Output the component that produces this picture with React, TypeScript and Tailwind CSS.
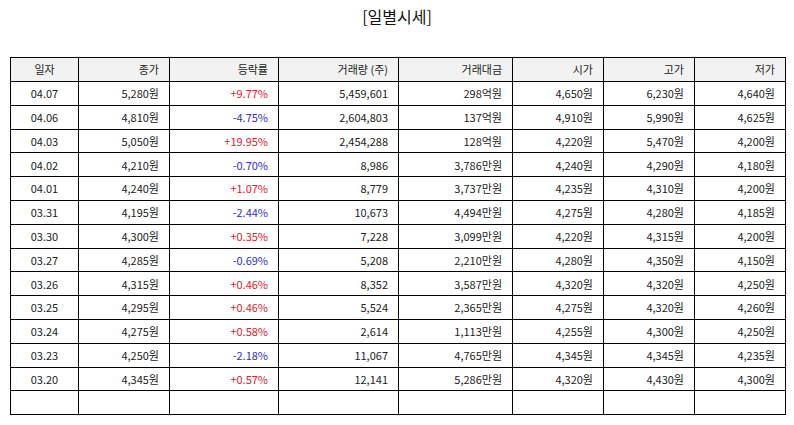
const ROWS = [
  ["04.07", "5,280원", "+9.77%", "5,459,601", "298억원", "4,650원", "6,230원", "4,640원"],
  ["04.06", "4,810원", "-4.75%", "2,604,803", "137억원", "4,910원", "5,990원", "4,625원"],
  ["04.03", "5,050원", "+19.95%", "2,454,288", "128억원", "4,220원", "5,470원", "4,200원"],
  ["04.02", "4,210원", "-0.70%", "8,986", "3,786만원", "4,240원", "4,290원", "4,180원"],
  ["04.01", "4,240원", "+1.07%", "8,779", "3,737만원", "4,235원", "4,310원", "4,200원"],
  ["03.31", "4,195원", "-2.44%", "10,673", "4,494만원", "4,275원", "4,280원", "4,185원"],
  ["03.30", "4,300원", "+0.35%", "7,228", "3,099만원", "4,220원", "4,315원", "4,200원"],
  ["03.27", "4,285원", "-0.69%", "5,208", "2,210만원", "4,280원", "4,350원", "4,150원"],
  ["03.26", "4,315원", "+0.46%", "8,352", "3,587만원", "4,320원", "4,320원", "4,250원"],
  ["03.25", "4,295원", "+0.46%", "5,524", "2,365만원", "4,275원", "4,320원", "4,260원"],
  ["03.24", "4,275원", "+0.58%", "2,614", "1,113만원", "4,255원", "4,300원", "4,250원"],
  ["03.23", "4,250원", "-2.18%", "11,067", "4,765만원", "4,345원", "4,345원", "4,235원"],
  ["03.20", "4,345원", "+0.57%", "12,141", "5,286만원", "4,320원", "4,430원", "4,300원"],
];

const HEADERS = ["일자", "종가", "등락률", "거래량 (주)", "거래대금", "시가", "고가", "저가"];
const WIDTHS = ["w-[68px]", "w-[91px]", "w-[109px]", "w-[120px]", "w-[114px]", "w-[91px]", "w-[91px]", "w-[91px]"];

export default function App() {
  return (
    <div className="w-[794px] h-[425px] bg-white text-[#222] font-['Noto_Sans_CJK_KR','Noto_Sans',sans-serif]">
      <h1 className="pt-[5px] h-[57px] text-center text-[16px] leading-[22px] text-[#111]">[일별시세]</h1>
      <table className="ml-[10px] w-[776px] border-collapse table-fixed text-[11px]">
        <thead>
          <tr className="h-[24px] bg-[#f2f2f2]">
            {HEADERS.map((h, i) => (
              <th
                key={h}
                className={`${WIDTHS[i]} border border-black font-normal px-[10px] ${i === 0 ? "text-center" : "text-right"}`}
              >
                {h}
              </th>
            ))}
          </tr>
        </thead>
        <tbody>
          {ROWS.map((r) => (
            <tr key={r[0]} className="h-[23.8px]">
              {r.map((c, i) => (
                <td
                  key={i}
                  className={`border border-black px-[10px] ${i === 0 ? "text-center" : "text-right"} ${
                    i === 2 ? (c.startsWith("+") ? "text-[#e0202a]" : "text-[#3030c8]") : ""
                  }`}
                >
                  {c}
                </td>
              ))}
            </tr>
          ))}
          <tr className="h-[23.8px]">
            {HEADERS.map((h) => (
              <td key={h} className="border border-black" />
            ))}
          </tr>
        </tbody>
      </table>
    </div>
  );
}
